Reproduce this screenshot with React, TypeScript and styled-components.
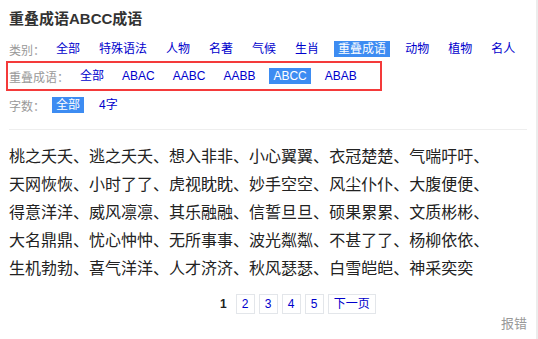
import React from 'react'
import styled, { createGlobalStyle } from 'styled-components'

const GlobalStyle = createGlobalStyle`
  html, body {
    margin: 0;
    padding: 0;
    background: #fff;
  }
  body {
    font-family: "Liberation Sans", Arial, "Noto Sans CJK SC", sans-serif;
  }
`

const Page = styled.div`
  box-sizing: border-box;
  width: 538px;
  height: 339px;
  padding: 9px 9px 0 9px;
  border-right: 2px solid #ececec;
  overflow: hidden;
`

const Title = styled.h1`
  margin: 0;
  font-size: 15px;
  line-height: 20px;
  font-weight: bold;
  color: #333;
`

const Filters = styled.div`
  margin-top: 6px;
`

const FilterRow = styled.div`
  display: flex;
  align-items: center;
  height: 28px;
  font-size: 12px;
`

const MarkedFrame = styled.div`
  box-sizing: border-box;
  width: 376px;
  height: 30px;
  margin: -3px 0 -1px -3px;
  padding-left: 1px;
  border: 2px solid #f43a3a;
  display: flex;
  align-items: center;
`

const Label = styled.span`
  color: #999;
  margin-right: 7px;
  white-space: nowrap;
`

const Options = styled.div<{ gap?: number }>`
  display: flex;
  gap: ${({ gap }) => gap ?? 11}px;
`

const Option = styled.a<{ active?: boolean }>`
  display: block;
  padding: 0 4px;
  line-height: 16px;
  color: ${({ active }) => (active ? '#fff' : '#0000cc')};
  background: ${({ active }) => (active ? '#3d8cf2' : 'transparent')};
  text-decoration: none;
  white-space: nowrap;
  cursor: pointer;
`

const Divider = styled.hr`
  margin: 10px 0 0 0;
  border: 0;
  border-top: 1px solid #eee;
`

const IdiomList = styled.div`
  margin-top: 11px;
  font-size: 16px;
  line-height: 28px;
  color: #222;
  font-family: "Noto Sans CJK SC", sans-serif;
`

const Idiom = styled.span`
  white-space: nowrap;
`

const Pager = styled.div`
  display: flex;
  align-items: center;
  gap: 4px;
  margin-top: 13px;
  padding-left: 211px;
  font-size: 12px;
`

const Current = styled.span`
  font-weight: bold;
  color: #222;
  margin-right: 5px;
`

const PageLink = styled.a`
  box-sizing: border-box;
  height: 20px;
  min-width: 19px;
  padding: 0 5px;
  border: 1px solid #e3e6ea;
  color: #0000cc;
  line-height: 18px;
  text-align: center;
  text-decoration: none;
`

const ReportRow = styled.div`
  display: flex;
  justify-content: flex-end;
  margin-top: 2px;
`

const Report = styled.a`
  font-size: 13px;
  line-height: 16px;
  color: #999;
  text-decoration: none;
`

const categories = ['全部', '特殊语法', '人物', '名著', '气候', '生肖', '重叠成语', '动物', '植物', '名人']
const patterns = ['全部', 'ABAC', 'AABC', 'AABB', 'ABCC', 'ABAB']
const lengths = ['全部', '4字']

const idioms = [
  '桃之夭夭', '逃之夭夭', '想入非非', '小心翼翼', '衣冠楚楚', '气喘吁吁',
  '天网恢恢', '小时了了', '虎视眈眈', '妙手空空', '风尘仆仆', '大腹便便',
  '得意洋洋', '威风凛凛', '其乐融融', '信誓旦旦', '硕果累累', '文质彬彬',
  '大名鼎鼎', '忧心忡忡', '无所事事', '波光粼粼', '不甚了了', '杨柳依依',
  '生机勃勃', '喜气洋洋', '人才济济', '秋风瑟瑟', '白雪皑皑', '神采奕奕'
]

export default function App() {
  return (
    <>
      <GlobalStyle />
      <Page>
        <Title>重叠成语ABCC成语</Title>

        <Filters>
          <FilterRow>
            <Label>类别：</Label>
            <Options>
              {categories.map(c => (
                <Option key={c} active={c === '重叠成语'}>{c}</Option>
              ))}
            </Options>
          </FilterRow>

          <FilterRow>
            <MarkedFrame>
              <Label>重叠成语：</Label>
              <Options gap={10}>
                {patterns.map(p => (
                  <Option key={p} active={p === 'ABCC'}>{p}</Option>
                ))}
              </Options>
            </MarkedFrame>
          </FilterRow>

          <FilterRow>
            <Label>字数：</Label>
            <Options>
              {lengths.map(l => (
                <Option key={l} active={l === '全部'}>{l}</Option>
              ))}
            </Options>
          </FilterRow>
        </Filters>

        <Divider />

        <IdiomList>
          {idioms.map((w, i) => (
            <Idiom key={w}>{w}{i < idioms.length - 1 ? '、' : ''}</Idiom>
          ))}
        </IdiomList>

        <Pager>
          <Current>1</Current>
          {['2', '3', '4', '5', '下一页'].map(n => (
            <PageLink key={n}>{n}</PageLink>
          ))}
        </Pager>

        <ReportRow>
          <Report>报错</Report>
        </ReportRow>
      </Page>
    </>
  )
}
